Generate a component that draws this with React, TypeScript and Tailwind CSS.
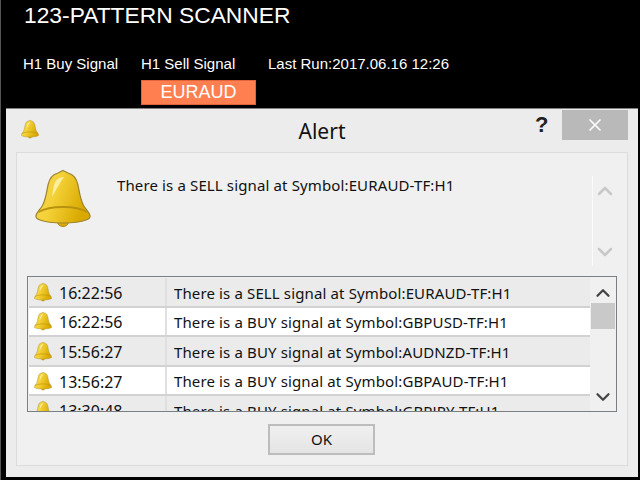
import React from 'react';
import { ChevronDown, ChevronUp, X } from 'lucide-react';

const rows = [
  { time: '16:22:56', text: 'There is a SELL signal at Symbol:EURAUD-TF:H1' },
  { time: '16:22:56', text: 'There is a BUY signal at Symbol:GBPUSD-TF:H1' },
  { time: '15:56:27', text: 'There is a BUY signal at Symbol:AUDNZD-TF:H1' },
  { time: '13:56:27', text: 'There is a BUY signal at Symbol:GBPAUD-TF:H1' },
  { time: '13:30:48', text: 'There is a BUY signal at Symbol:GBPJPY-TF:H1' },
];

const Bell: React.FC<{ id: string; className: string }> = ({ id, className }) => (
  <svg viewBox="0 0 56 58" className={className}>
    <defs>
      <linearGradient id={id} x1="0" y1="0" x2="1" y2="0.35">
        <stop offset="0" stopColor="#f5d65a" />
        <stop offset="0.45" stopColor="#f4d137" />
        <stop offset="1" stopColor="#d9a900" />
      </linearGradient>
    </defs>
    <path d="M22 51c0 4 2.500 6.500 6 6.500s6-2.500 6-6.500z" fill="#d9a808" stroke="#a98a1c" strokeWidth="1" />
    <path
      d="M28 1.500l5 2.500c6 1.500 8.500 5 10 12 1.500 8 2.500 15 5.500 20.500 2 3.500 5.500 6.500 6.500 10 .5 2-1 3.500-4 4.500-5 2-13 3-23 3s-18-1-23-3c-3-1-4.500-2.500-4-4.500 1-3.500 4.500-6.500 6.500-10 3-5.500 4-12.500 5.500-20.500 1.500-7 4-10.500 10-12z"
      fill={`url(#${id})`}
      stroke="#9c8430"
      strokeWidth="1.200"
    />
    <path d="M3.500 43c6-3.500 15-5 24.500-5s18.500 1.500 24.500 5" fill="none" stroke="#b8920f" strokeWidth="1.800" />
    <path d="M17 28c1-8 2-14 4.500-17 2-2 5-3 7.500-3-3 4-7 11-12 20z" fill="#fbeea0" />
  </svg>
);

const App: React.FC = () => {
  return (
    <div className="w-[640px] h-[480px] overflow-hidden bg-black border-l border-[#555] font-['Liberation_Sans',sans-serif] text-white">
      <div className="h-[108px] pl-[22px]">
        <p className="ml-px text-[22.800px] leading-[30px]">123-PATTERN SCANNER</p>
        <div className="mt-[25px] flex text-[15px] leading-[18px]">
          <div className="w-[118px]">H1 Buy Signal</div>
          <div className="w-[127px]">
            <p>H1 Sell Signal</p>
          </div>
          <div>Last Run:2017.06.16 12:26</div>
        </div>
        <div className="ml-[118px] mt-[7px] w-[115px] h-[25px] bg-[#ff7f50] border border-[#e0643a] text-center text-[18px] leading-[23px]">
          EURAUD
        </div>
      </div>

      <div className="ml-[5px] w-[632px] h-[369px] bg-[#ececec] border-t border-[#808080] px-[10px] font-['Noto_Sans',sans-serif] text-[#111]">
        <div className="relative h-[43px] flex items-center justify-center text-[21px]">
          <Bell id="bell-title" className="absolute left-[5px] top-[10px] w-[18px] h-[20px]" />
          <span className="pt-[3px]">Alert</span>
          <span className="absolute left-[519px] top-[1px] font-['Liberation_Sans',sans-serif] text-[22px] leading-[30px] font-bold text-[#222]">?</span>
          <div className="absolute right-0 top-[1px] w-[66px] h-[30px] bg-[#b9b9b9] flex items-center justify-center">
            <X size={20} strokeWidth={2} color="#fff" />
          </div>
        </div>

        <div className="h-[314px] bg-[#f0f0f0] border border-[#dcdcdc] pt-[16px] px-[10px]">
          <div className="flex h-[107px]">
            <Bell id="bell-big" className="ml-[8px] w-[56px] h-[58px] shrink-0" />
            <p className="ml-[26px] pt-[6px] text-[15px] leading-[20px] tracking-[0.130px]">
              There is a SELL signal at Symbol:EURAUD-TF:H1
            </p>
            <div className="ml-auto mt-[7px] w-[25px] h-[90px] border-l border-[#fafafa] flex flex-col items-center justify-between pt-[3px] pb-[2px] text-[#c8c8c8]">
              <ChevronUp size={24} strokeWidth={2.500} />
              <ChevronDown size={24} strokeWidth={2.500} />
            </div>
          </div>

          <div className="h-[136px] w-[590px] bg-[#f0f0f0] border border-[#7a7f85] flex overflow-hidden">
            <div className="w-[562px] pt-[1px] pl-px">
              {rows.map((row, i) => (
                <div
                  key={i}
                  className={`flex h-[29.600px] border-b-2 border-[#d2d2d2] text-[15px] tracking-[0.130px] ${i % 2 === 0 ? 'bg-[#ebebeb]' : 'bg-white'}`}
                >
                  <div className="w-[138px] flex items-center border-r-2 border-[#e0e0e0] pl-[5px]">
                    <Bell id={`bell-row-${i}`} className="w-[18px] h-[20px] shrink-0" />
                    <span className="ml-[7px] pt-[2px] text-[16px] tracking-normal">{row.time}</span>
                  </div>
                  <div className="flex items-center pl-[7px] pt-[2px]">{row.text}</div>
                </div>
              ))}
            </div>
            <div className="w-[26px] flex flex-col items-center">
              <ChevronUp size={22} strokeWidth={2.500} color="#444" className="mt-[5px]" />
              <div className="mt-[-1px] w-[24px] h-[26px] bg-[#c9c9c9]" />
              <ChevronDown size={22} strokeWidth={2.500} color="#444" className="mt-[57px]" />
            </div>
          </div>

          <div className="mt-[12px] flex justify-center">
            <button className="w-[107px] h-[31px] ml-[-1px] bg-gradient-to-b from-[#f0f0f0] to-[#e4e4e4] border-2 border-[#bdbdbd] text-[15px]">OK</button>
          </div>
        </div>
      </div>
    </div>
  );
};

export default App;
